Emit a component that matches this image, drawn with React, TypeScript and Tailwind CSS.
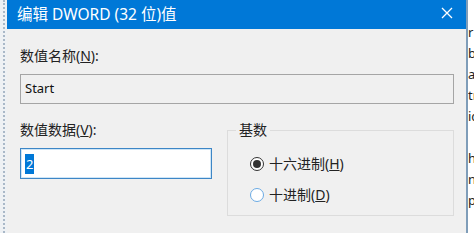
import React from 'react';

const font = { fontFamily: '"Segoe UI", "Noto Sans", "Noto Sans CJK SC", sans-serif' };

const fragments = ['r', 'bı', 'a', 'tr', 'ic', '', 'h', 'n', 'p'];

function Radio({ checked, label, hotkey }: { checked?: boolean; label: string; hotkey: string }) {
  return (
    <div className="flex h-4 items-center gap-[5px]">
      <span
        className={`flex h-[14px] w-[14px] items-center justify-center rounded-full border bg-white ${
          checked ? 'border-[#333333]' : 'border-[#6aaae4]'
        }`}
      >
        {checked && <span className="h-[8px] w-[8px] rounded-full bg-[#333333]" />}
      </span>
      <span className="text-[14px] leading-4 text-[#222222]">
        {label}(<span className="underline">{hotkey}</span>)
      </span>
    </div>
  );
}

export default function App() {
  return (
    <div className="flex h-[233px] w-[474px] overflow-hidden bg-white" style={font}>
      {/* dotted edge of the window behind */}
      <div className="flex w-[7px] justify-center bg-[#eef1f4]">
        <div className="w-0 border-l-2 border-dotted border-[#a9b8c8]" />
      </div>

      {/* Dialog */}
      <div className="flex w-[459px] flex-col bg-[#f0f0f0]">
        {/* Title bar */}
        <div className="flex h-[29px] items-center justify-between bg-[#0078d7] pl-[10px] pr-[13px]">
          <span className="pb-[2px] text-[15.5px] leading-5 text-white">编辑 DWORD (32 位)值</span>
          <svg width="12" height="12" viewBox="0 0 12 12" className="mb-[4px]">
            <path d="M1 1L11 11M11 1L1 11" stroke="white" strokeWidth="1.3" />
          </svg>
        </div>

        <div className="flex flex-col pl-[13px] pr-[12px]">
          <label className="mt-[19px] text-[14px] leading-4 text-[#222222]">
            数值名称(<span className="underline">N</span>):
          </label>
          <div className="mt-[10px] flex h-[30px] items-center border border-[#a5a5a5] bg-[#f0f0f0] px-[4px] text-[13px] text-[#111111]">
            Start
          </div>

          <div className="mt-[18px] flex gap-[15px]">
            <div className="flex w-[192px] flex-col">
              <label className="text-[14px] leading-4 text-[#222222]">
                数值数据(<span className="underline">V</span>):
              </label>
              <div className="mt-[10px] flex h-[31px] items-center border border-[#3d86c6] bg-white px-[4px] shadow-[inset_0_0_0_1px_#cfe6f7]">
                <span className="bg-[#0078d7] px-[1px] text-[13px] leading-5 text-white">2</span>
              </div>
            </div>

            <div className="relative mt-[8px] flex h-[86px] flex-1 flex-col gap-[15px] border border-[#dcdcdc] pl-[22px] pt-[25px]">
              <span className="absolute -top-[9px] left-[8px] bg-[#f0f0f0] px-[3px] text-[14px] leading-4 text-[#222222]">
                基数
              </span>
              <Radio checked label="十六进制" hotkey="H" />
              <Radio label="十进制" hotkey="D" />
            </div>
          </div>
        </div>
      </div>

      {/* window behind, right side */}
      <div className="flex flex-1 flex-col overflow-hidden border-l-2 border-[#7f9db9] pt-[22px] text-[13px] leading-[21px] text-[#222222]">
        {fragments.map((f, i) => (
          <span key={i} className="h-[21px] whitespace-nowrap">
            {f}
          </span>
        ))}
      </div>
    </div>
  );
}
